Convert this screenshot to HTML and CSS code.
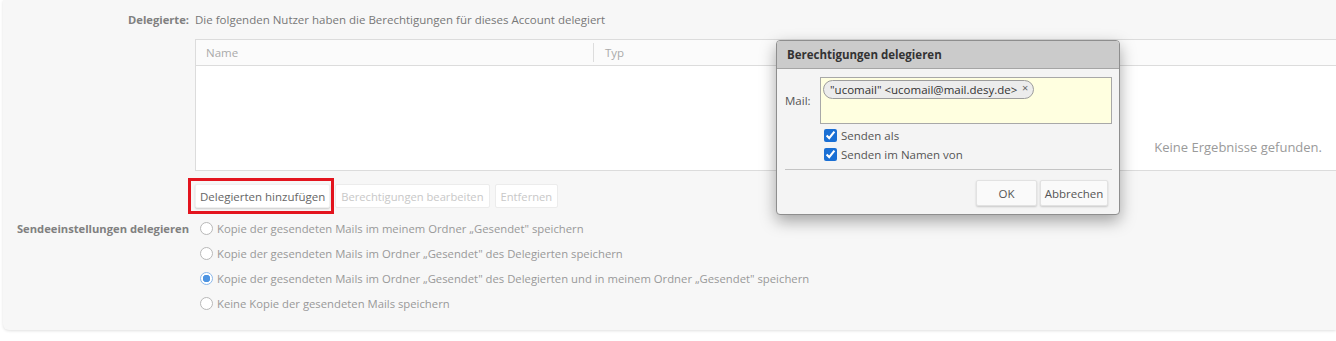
FILE: index.html
```html
<!DOCTYPE html>
<html lang="de">
<head>
    <meta charset="UTF-8">
    <title>Delegierte</title>
    <link rel="stylesheet" href="styles.css">
</head>
<body>
    <div class="panel">
        <div class="row">
            <div class="label label-top">Delegierte:</div>
            <div class="content">
                <div class="intro">Die folgenden Nutzer haben die Berechtigungen für dieses Account delegiert</div>
                <div class="grid">
                    <div class="grid-head">
                        <div class="col col-name">Name</div>
                        <div class="col col-type">Typ</div>
                    </div>
                    <div class="grid-body">
                        <span class="empty">Keine Ergebnisse gefunden.</span>
                    </div>
                </div>
                <div class="actions">
                    <span class="highlight"><button class="btn">Delegierten hinzufügen</button></span>
                    <button class="btn" disabled>Berechtigungen bearbeiten</button>
                    <button class="btn" disabled>Entfernen</button>
                </div>
            </div>
        </div>
        <div class="row row-send">
            <div class="label label-send">Sendeeinstellungen delegieren</div>
            <div class="content options">
                <label class="option"><input type="radio" name="copy"> Kopie der gesendeten Mails im meinem Ordner „Gesendet" speichern</label>
                <label class="option"><input type="radio" name="copy"> Kopie der gesendeten Mails im Ordner „Gesendet" des Delegierten speichern</label>
                <label class="option"><input type="radio" name="copy" checked> Kopie der gesendeten Mails im Ordner „Gesendet" des Delegierten und in meinem Ordner „Gesendet" speichern</label>
                <label class="option"><input type="radio" name="copy"> Keine Kopie der gesendeten Mails speichern</label>
            </div>
        </div>
    </div>

    <div class="dialog">
        <div class="dialog-title">Berechtigungen delegieren</div>
        <div class="dialog-body">
            <div class="mail-row">
                <span class="mail-label">Mail:</span>
                <div class="mail-input">
                    <span class="chip">"ucomail" &lt;ucomail@mail.desy.de&gt;<span class="chip-close">×</span></span>
                </div>
            </div>
            <div class="checks">
                <label class="check"><input type="checkbox" checked> Senden als</label>
                <label class="check"><input type="checkbox" checked> Senden im Namen von</label>
            </div>
            <div class="dialog-footer">
                <button class="btn btn-dialog btn-ok">OK</button>
                <button class="btn btn-dialog btn-cancel">Abbrechen</button>
            </div>
        </div>
    </div>
</body>
</html>
```

FILE: styles.css
```css
body {
    margin: 0;
    background-color: #fff;
    font-family: 'Open Sans', sans-serif;
    font-size: 11.5px;
    color: #777;
    position: relative;
    overflow: hidden;
    height: 341px;
}

.panel {
    margin-left: 3px;
    height: 330px;
    box-sizing: border-box;
    padding-top: 12px;
    background-color: #f7f7f7;
    border-radius: 0 0 0 6px;
    box-shadow: 0 1px 3px rgba(0, 0, 0, 0.12);
}

.row {
    display: grid;
    grid-template-columns: 192px 1fr;
}

.label {
    font-size: 11.2px;
    font-weight: bold;
    color: #808080;
    text-align: right;
    padding-right: 6px;
    white-space: nowrap;
}

.label-top {
    line-height: 16px;
}

.label-send {
    line-height: 25px;
}

.intro {
    line-height: 16px;
    color: #777;
}

/* table */
.grid {
    margin-top: 11px;
    margin-right: -10px;
    border: 1px solid #dcdcdc;
    border-right: none;
    background-color: #fff;
}

.grid-head {
    display: flex;
    height: 25px;
    border-bottom: 1px solid #dcdcdc;
    background-color: #fbfbfb;
    color: #aaa;
}

.col {
    margin: 3px 0;
    line-height: 19px;
    padding-left: 10px;
}

.col-name {
    width: 387px;
    border-right: 1px solid #ddd;
}

.col-type {
    padding-left: 11px;
}

.grid-body {
    height: 104px;
    display: flex;
    justify-content: flex-end;
    align-items: flex-end;
    box-sizing: border-box;
    padding: 0 24px 15px 0;
}

.empty {
    font-size: 13px;
    line-height: 16px;
    color: #9a9a9a;
}

/* buttons */
.actions {
    display: flex;
    align-items: center;
    margin-top: 13px;
}

.btn {
    font-family: 'Open Sans', sans-serif;
    font-size: 11.5px;
    height: 24px;
    padding: 0 4px;
    margin: 0 4px 0 0;
    color: #666;
    background-color: #fff;
    border: 1px solid #f0f0f0;
    border-radius: 2px;
    box-shadow: 0 1px 2px rgba(0, 0, 0, 0.18);
    cursor: pointer;
}

.btn:disabled {
    font-size: 11.2px;
    padding: 0 5px;
    margin-right: 5px;
    color: #c8c8c8;
    box-shadow: none;
    border-color: #ececec;
    cursor: default;
}

.highlight {
    display: inline-flex;
    border: 3px solid #e3141e;
    padding: 3px 1px 3px 4px;
    margin: -6px 1px -6px -7px;
}

.highlight .btn {
    margin: 0;
}

/* send options */
.row-send {
    margin-top: 8px;
}

.options {
    display: flex;
    flex-direction: column;
}

.option {
    display: flex;
    align-items: center;
    height: 25px;
    font-size: 11.3px;
    color: #999;
}

.option input {
    appearance: none;
    width: 13px;
    height: 13px;
    margin: 0 4px 0 5px;
    border: 1px solid #b8b8b8;
    border-radius: 50%;
    background-color: #fff;
    box-sizing: border-box;
}

.option input:checked {
    border-color: #8cb8ea;
    background: radial-gradient(circle, #4d94e2 0 3.5px, #fff 4px);
}

/* dialog */
.dialog {
    position: absolute;
    left: 776px;
    top: 40px;
    width: 344px;
    height: 175px;
    box-sizing: border-box;
    background-color: #f4f4f4;
    border: 1px solid #8e8e8e;
    border-radius: 4px;
    box-shadow: 0 6px 16px rgba(0, 0, 0, 0.35);
    overflow: hidden;
    color: #555;
}

.dialog-title {
    height: 27px;
    line-height: 27px;
    padding-left: 10px;
    font-weight: bold;
    color: #333;
    background-color: #cbcbcb;
    border-bottom: 1px solid #a5a5a5;
}

.dialog-body {
    padding: 8px 7px 0 8px;
}

.mail-row {
    display: flex;
    align-items: center;
}

.mail-label {
    width: 35px;
    color: #555;
}

.mail-input {
    flex: 1;
    height: 47px;
    box-sizing: border-box;
    padding: 2px;
    background-color: #ffffe0;
    border: 1px solid #a8a8a8;
}

.chip {
    display: inline-block;
    height: 19px;
    line-height: 17px;
    box-sizing: border-box;
    padding: 0 16px 0 6px;
    position: relative;
    color: #333;
    border: 1px solid #9c9c9c;
    border-radius: 10px;
    background-color: #ececec;
}

.chip-close {
    position: absolute;
    right: 5px;
    top: -2px;
    font-size: 11px;
    color: #666;
}

.checks {
    padding-top: 2px;
}

.check {
    display: flex;
    align-items: center;
    height: 19px;
    padding-left: 39px;
    color: #555;
}

.check input {
    width: 13px;
    height: 13px;
    margin: 0 4px 0 0;
    accent-color: #1a6fd4;
}

.dialog-footer {
    display: flex;
    justify-content: flex-end;
    gap: 3px;
    margin-top: 5px;
    padding: 10px 4px 0 0;
    border-top: 1px solid #c4c4c4;
}

.btn-dialog {
    height: 26px;
    margin: 0;
    padding: 0;
    color: #555;
    background-color: #fafafa;
    border: 1px solid #e2e2e2;
}

.btn-ok {
    width: 61px;
}

.btn-cancel {
    width: 68px;
}
```
